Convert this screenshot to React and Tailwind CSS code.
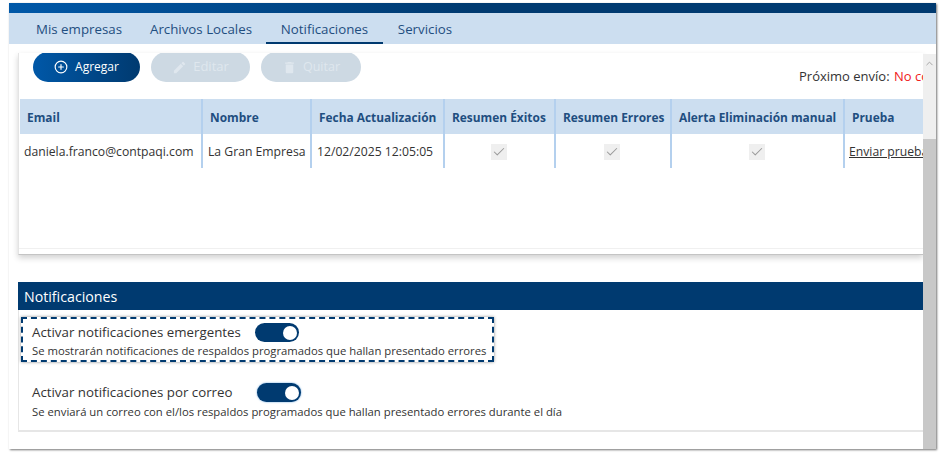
import React from 'react';
import { CirclePlus, Check, ChevronUp } from 'lucide-react';
import { MdEdit, MdDelete } from 'react-icons/md';

const columns = [
  { label: 'Email', w: 'w-[182px]' },
  { label: 'Nombre', w: 'w-[109px]' },
  { label: 'Fecha Actualización', w: 'w-[133px]' },
  { label: 'Resumen Éxitos', w: 'w-[111px]' },
  { label: 'Resumen Errores', w: 'w-[116px]' },
  { label: 'Alerta Eliminación manual', w: 'w-[173px]' },
  { label: 'Prueba', w: 'w-[90px]' },
];

function Tab({ label, active, w }) {
  return (
    <div className={`${w} pt-[4px] flex items-center justify-center h-full text-[13.3px] text-[#1f4e80] border-b-2 ${active ? 'border-[#003a70]' : 'border-transparent'}`}>
      {label}
    </div>
  );
}

function Toggle({ focused }) {
  return (
    <div className={`w-[44px] h-[19px] rounded-full bg-[#003a70] flex items-center justify-end pr-[2px] ${focused ? 'shadow-[0_0_2px_#5a9bd8]' : ''}`}>
      <div className="w-[14px] h-[14px] rounded-full bg-white" />
    </div>
  );
}

function Checkbox() {
  return (
    <div className="w-4 h-4 mx-auto -translate-x-[1px] translate-y-[1px] bg-[#efefef] flex items-center justify-center">
      <Check size={14} className="text-[#999999]" strokeWidth={1.75} />
    </div>
  );
}

export default function App() {
  return (
    <div className="w-[941px] h-[454px] bg-white overflow-hidden pt-[3px] pl-[9px] font-['Open_Sans',sans-serif]">
      <div className="w-[927px] h-[446px] bg-white flex flex-col shadow-[1px_1px_2px_rgba(0,0,0,0.55)]">
        <div className="h-[10px] bg-gradient-to-r from-[#0058a8] to-[#003a70] to-50%" />
        <div className="h-[31px] bg-[#ccdef0] flex pl-[13px]">
          <Tab w="w-[114px]" label="Mis empresas" />
          <Tab w="w-[130px]" label="Archivos Locales" />
          <Tab w="w-[117px]" label="Notificaciones" active />
          <Tab w="w-[84px]" label="Servicios" />
        </div>

        <div className="flex-1 flex min-h-0">
          <div className="flex-1 min-w-0 pl-[9px] pt-[9px]">
            {/* Destinatarios */}
            <div className="h-[202px] flex flex-col border-l border-[#e4e4e4] border-b border-b-[#c4c4c4] shadow-[0_3px_6px_rgba(0,0,0,0.18)] overflow-hidden">
              <div className="flex-1 min-h-0 border-b border-[#f0f0f0]">
                <div className="flex items-start pl-[14px] h-[46px]">
                  <button className="w-[107px] h-[30px] -mt-px rounded-full bg-gradient-to-r from-[#0058a8] to-[#003a70] text-white text-[12px] flex items-center justify-center gap-[7px] shrink-0">
                    <CirclePlus size={14} /> Agregar
                  </button>
                  <button className="w-[99px] h-[30px] -mt-px ml-[11px] rounded-full bg-[#cdd9e3] text-[#dfe7ee] text-[13px] flex items-center justify-center gap-[6px] shrink-0">
                    <MdEdit size={15} /> Editar
                  </button>
                  <button className="w-[100px] h-[30px] -mt-px ml-[11px] rounded-full bg-[#cdd9e3] text-[#dfe7ee] text-[12.5px] flex items-center justify-center gap-[6px] shrink-0">
                    <MdDelete size={15} /> Quitar
                  </button>
                  <div className="ml-[438px] mt-[14px] text-[13px] text-[#333] whitespace-nowrap shrink-0">
                    Próximo envío: <span className="ml-[1px] text-[#f02020]">No configurado</span>
                  </div>
                </div>
                <table className="table-fixed w-[914px] ml-px border-collapse text-[12.2px] text-[#333]">
                  <thead>
                    <tr className="h-[35px] bg-[#ccdef0]">
                      {columns.map((c, i) => (
                        <th key={c.label} className={`${c.w} text-left font-bold text-[11.9px] text-[#1f4e80] whitespace-nowrap pl-[7px] pr-0 pt-[2px] ${i < 6 ? 'border-r-2 border-[#b4d0ee]' : ''}`}>
                          {c.label}
                        </th>
                      ))}
                    </tr>
                  </thead>
                  <tbody>
                    <tr className="h-[34px]">
                      <td className="pl-[4px] pt-[2px] whitespace-nowrap border-r-2 border-[#b4d0ee]">daniela.franco@contpaqi.com</td>
                      <td className="pl-[5px] pt-[2px] whitespace-nowrap border-r-2 border-[#b4d0ee]">La Gran Empresa</td>
                      <td className="pl-[5px] pt-[2px] whitespace-nowrap border-r-2 border-[#b4d0ee]">12/02/2025 12:05:05</td>
                      <td className="border-r-2 border-[#b4d0ee]"><Checkbox /></td>
                      <td className="border-r-2 border-[#b4d0ee]"><Checkbox /></td>
                      <td className="border-r-2 border-[#b4d0ee]"><Checkbox /></td>
                      <td className="pl-[4px] pt-[2px] whitespace-nowrap underline">Enviar prueba</td>
                    </tr>
                  </tbody>
                </table>
              </div>
              <div className="h-[5px] shrink-0" />
            </div>

            {/* Notificaciones */}
            <div className="mt-[27px] h-[28px] pt-[1px] bg-[#003a70] text-white text-[14.2px] flex items-center pl-[6px]">
              Notificaciones
            </div>
            <div className="h-[122px] border-l border-b-2 border-[#e6e6e6] pl-[2px] pt-[7px]">
              <div className="w-[473px] h-[45px] border-2 border-dashed border-[#003a70] pl-[9px] pt-[3px] shadow-[0_0_3px_rgba(0,0,0,0.45)]">
                <div className="flex items-center h-[21px]">
                  <span className="text-[13.3px] text-[#333] w-[223px]">Activar notificaciones emergentes</span>
                  <Toggle />
                </div>
                <div className="text-[11.3px] leading-[16px] text-[#333] whitespace-nowrap">
                  Se mostrarán notificaciones de respaldos programados que hallan presentado errores
                </div>
              </div>
              <div className="pl-[11px] mt-[20px]">
                <div className="flex items-center h-[21px]">
                  <span className="text-[13.3px] text-[#333] w-[225px]">Activar notificaciones por correo</span>
                  <Toggle focused />
                </div>
                <div className="text-[11.3px] leading-[16px] text-[#333] whitespace-nowrap mt-[1px]">
                  Se enviará un correo con el/los respaldos programados que hallan presentado errores durante el día
                </div>
              </div>
            </div>
          </div>

          {/* Scrollbar */}
          <div className="w-[13px] mt-[10px] bg-[#efefef] flex flex-col">
            <div className="h-[85px] flex justify-center pt-[4px]">
              <ChevronUp size={11} className="text-[#a0a0a0]" />
            </div>
            <div className="flex-1 bg-[#c8c8c8]" />
          </div>
        </div>
      </div>
    </div>
  );
}
